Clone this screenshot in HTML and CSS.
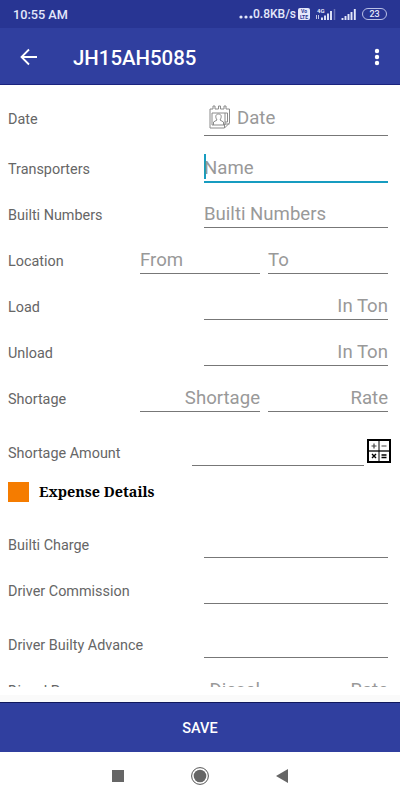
FILE: index.html
```html
<!DOCTYPE html>
<html lang="en">

<head>
    <meta charset="UTF-8">
    <meta name="viewport" content="width=device-width, initial-scale=1.0">
    <title>JH15AH5085</title>
    <link rel="stylesheet" href="styles.css">
</head>

<body>
    <div class="status">
        <span class="time">10:55 AM</span>
        <div class="status-right">
            <svg class="dots" width="14" height="4" viewBox="0 0 14 4">
                <circle cx="2" cy="2" r="1.6" />
                <circle cx="7" cy="2" r="1.6" />
                <circle cx="12" cy="2" r="1.6" />
            </svg>
            <span class="speed">0.8KB/s</span>
            <span class="volte"><span>Vo</span><span>LTE</span></span>
            <svg class="signal-4g" width="22" height="12" viewBox="0 0 22 12">
                <text x="2" y="4.500">4G</text>
                <path d="M1.5 7v4M3.5 7v4" stroke-width=".8" />
                <path d="M7 9.5V12M10 7.5V12M13 5.5V12M16 3V12" stroke-width="1.9" />
                <path d="M19.5 1V12" stroke-width="1.5" opacity=".35" />
            </svg>
            <svg class="signal" width="16" height="12" viewBox="0 0 16 12">
                <path d="M1.5 10V12M4.5 8V12M7.5 6V12M10.5 4V12M13.8 1V12" stroke-width="1.9" />
            </svg>
            <span class="battery">23</span>
        </div>
    </div>
    <div class="toolbar">
        <svg class="back" width="18" height="18" viewBox="0 0 18 18">
            <path d="M17 9H2M9 1.5L1.5 9L9 16.5" />
        </svg>
        <h1>JH15AH5085</h1>
        <svg class="more" width="6" height="18" viewBox="0 0 6 18">
            <circle cx="3" cy="3" r="2.2" />
            <circle cx="3" cy="9" r="2.2" />
            <circle cx="3" cy="15" r="2.2" />
        </svg>
    </div>

    <div class="content">
        <div class="form">
            <div class="row row-date">
                <label>Date</label>
                <div class="field">
                    <svg class="calendar" width="22" height="24" viewBox="0 0 22 24">
                        <path d="M1 4H4V1H6V4H9.500V1H11.500V4H15V1H17V4H20.500V18L15.500 23H1Z" />
                        <path d="M3 8H16V20H3ZM15.500 23V19H20.500" />
                        <path d="M4.500 20V17L8 15C6 12 6.500 9 9.500 9S13 12 11 15L14.500 17V20M16 8H18.500V17H16" />
                    </svg>
                    <span>Date</span>
                </div>
            </div>
            <div class="row">
                <label>Transporters</label>
                <div class="field active"><i class="caret"></i><span>Name</span></div>
            </div>
            <div class="row">
                <label>Builti Numbers</label>
                <div class="field"><span>Builti Numbers</span></div>
            </div>
            <div class="row">
                <label>Location</label>
                <div class="field half"><span>From</span></div>
                <div class="field half"><span>To</span></div>
            </div>
            <div class="row">
                <label>Load</label>
                <div class="field right"><span>In Ton</span></div>
            </div>
            <div class="row">
                <label>Unload</label>
                <div class="field right"><span>In Ton</span></div>
            </div>
            <div class="row">
                <label>Shortage</label>
                <div class="field half right"><span>Shortage</span></div>
                <div class="field half right"><span>Rate</span></div>
            </div>
            <div class="row row-amount">
                <label>Shortage Amount</label>
                <div class="field amount"></div>
                <svg class="calc" width="24" height="24" viewBox="0 0 24 24">
                    <rect x="1" y="1" width="22" height="22" stroke-width="2" />
                    <path d="M12 1V23" stroke-width="1" />
                    <path d="M1 12H23" stroke-width="1.3" />
                    <path d="M4.500 7H9.500M7 4.500V9.500M14.500 7H19.500" stroke="#444" stroke-width="1.2" />
                    <path d="M5 15L9 19M9 15L5 19M14.500 16H19.500M14.500 18.500H19.500" stroke-width="1.400" />
                </svg>
            </div>
            <div class="section">
                <span class="square"></span>
                <h2>Expense Details</h2>
            </div>
            <div class="row row-charge">
                <label>Builti Charge</label>
                <div class="field"></div>
            </div>
            <div class="row">
                <label>Driver Commission</label>
                <div class="field"></div>
            </div>
            <div class="row row-tall">
                <label>Driver Builty Advance</label>
                <div class="field"></div>
            </div>
            <div class="row">
                <label>Diesel Pump</label>
                <div class="field half right"><span>Diesel</span></div>
                <div class="field half right"><span>Rate</span></div>
            </div>
        </div>
    </div>

    <button class="save">SAVE</button>

    <div class="nav">
        <svg width="12" height="12" viewBox="0 0 12 12">
            <rect width="12" height="12" />
        </svg>
        <svg width="18" height="18" viewBox="0 0 18 18">
            <circle cx="9" cy="9" r="8.400" class="ring" />
            <circle cx="9" cy="9" r="6.300" />
        </svg>
        <svg width="12" height="14" viewBox="0 0 12 14">
            <path d="M12 0V14L0 7Z" />
        </svg>
    </div>
</body>

</html>
```
FILE: styles.css
```css
* {
    box-sizing: border-box;
    margin: 0;
    padding: 0;
}

body {
    display: flex;
    flex-direction: column;
    width: 400px;
    height: 800px;
    overflow: hidden;
    background: #fafafa;
    font-family: Roboto, sans-serif;
}

svg {
    flex: none;
}

.status {
    display: flex;
    justify-content: space-between;
    align-items: center;
    height: 28px;
    padding: 0 13px;
    background: #283593;
    color: #e4e8fa;
}

.time {
    font-size: 12.7px;
    font-weight: 500;
}

.status-right {
    display: flex;
    align-items: center;
}

.status-right svg {
    fill: #e4e8fa;
}

.status-right path {
    stroke: #e4e8fa;
}

.status-right .dots {
    margin: 6px 0 0;
}

.speed {
    font-size: 12px;
    font-weight: 500;
}

.volte {
    display: flex;
    flex-direction: column;
    align-items: center;
    width: 12px;
    height: 12px;
    margin-left: 2px;
    border-radius: 2px;
    background: #e4e8fa;
    color: #283593;
    font-size: 5px;
    font-weight: 700;
    line-height: 6px;
}

.signal-4g {
    margin-left: 5px;
    overflow: visible;
}

.signal-4g text {
    font-size: 6px;
    font-weight: 700;
}

.signal {
    margin-left: 4px;
}

.battery {
    width: 25px;
    height: 12px;
    margin-left: 5px;
    border: 1.5px solid #b9c0e6;
    border-radius: 6px;
    font-size: 9px;
    font-weight: 500;
    line-height: 10px;
    text-align: center;
}

.toolbar {
    display: flex;
    align-items: center;
    height: 57px;
    padding: 1px 20px 0;
    border-bottom: 1px solid #1a237e;
    background: #303f9f;
}

.back {
    fill: none;
    stroke: #fff;
    stroke-width: 1.8;
}

.toolbar h1 {
    flex: 1;
    padding-top: 2px;
    margin-left: 35px;
    color: #fff;
    font-size: 20.4px;
    font-weight: 500;
}

.more {
    fill: #fff;
}

.content {
    height: 610px;
    padding-bottom: 8px;
    background: #fff;
}

.form {
    height: 602px;
    padding: 0 12px 0 8px;
    overflow: hidden;
}

.row {
    display: flex;
    align-items: flex-end;
    gap: 8px;
    height: 46px;
}

.row-date {
    height: 51px;
}

.row label {
    flex: 1;
    color: #666;
    font-size: 14.4px;
    line-height: 25px;
}

.row-date label {
    padding-bottom: 4px;
}

.field {
    display: flex;
    align-items: center;
    width: 184px;
    height: 30px;
    padding-top: 2px;
    border-bottom: 1px solid #777;
    color: #999;
    font-size: 18.6px;
}

.half {
    width: 120px;
}

.right {
    justify-content: flex-end;
}

.row-date .field {
    height: 38px;
    padding-left: 5px;
}

.calendar {
    margin: -2px 6px 0 0;
    fill: none;
    stroke: #8a8a8a;
}

.active {
    height: 31px;
    margin-bottom: -1px;
    border-bottom: 2px solid #179cc0;
}

.caret {
    width: 2px;
    height: 25px;
    margin: -2px -2px 0 0;
    background: #179cc0;
}

.row-amount {
    gap: 3px;
    height: 54px;
}

.amount {
    width: 172px;
}

.calc {
    margin: 0 -3px 3px 0;
    fill: none;
    stroke: #000;
}

.section {
    display: flex;
    align-items: center;
    gap: 10px;
    height: 54px;
    padding-bottom: 3px;
}

.square {
    width: 21px;
    height: 20px;
    background: #f57c00;
}

.section h2 {
    color: #000;
    font-family: "Noto Serif", "Liberation Serif", serif;
    font-size: 14.4px;
    font-weight: 700;
}

.row-charge {
    height: 38px;
}

.row-tall {
    height: 54px;
}

.save {
    height: 50px;
    margin-top: 7px;
    padding-top: 1px;
    border: 0;
    border-top: 1px solid #10185c;
    background: #303f9f;
    color: #fff;
    font-family: Roboto, sans-serif;
    font-size: 14.5px;
    font-weight: 500;
}

.nav {
    display: flex;
    flex: 1;
    align-items: center;
    justify-content: center;
    gap: 67px;
    padding-right: 1px;
    background: #fff;
    fill: #666;
}

.ring {
    fill: none;
    stroke: #555;
}
```
